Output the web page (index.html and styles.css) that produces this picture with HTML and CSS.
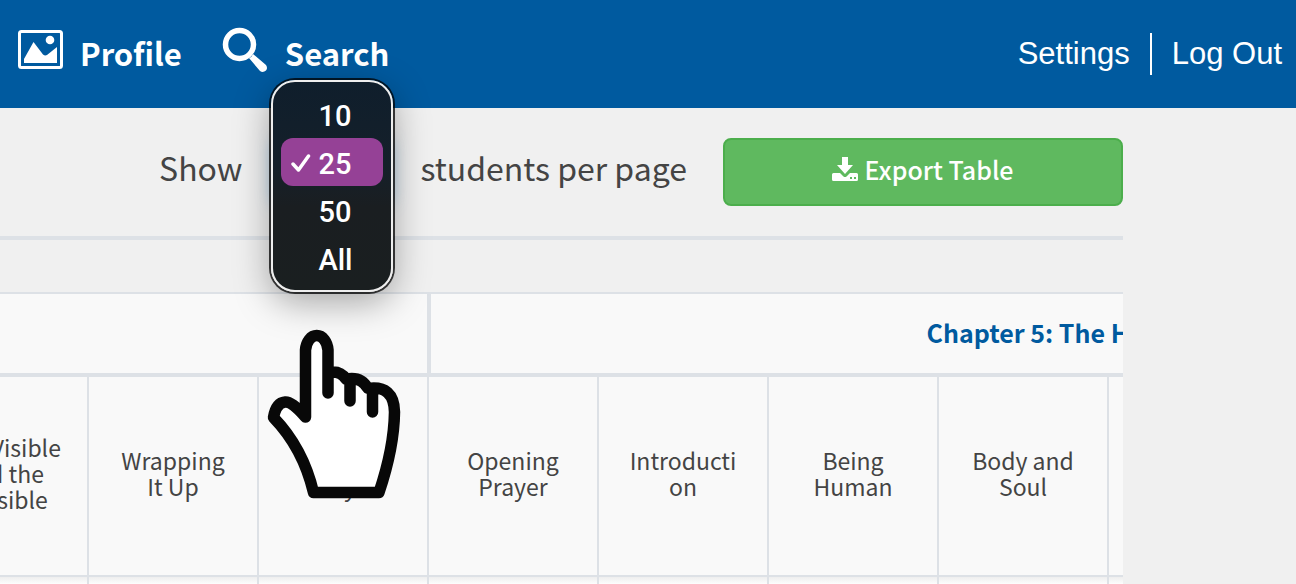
FILE: index.html
```html
<!DOCTYPE html>
<html lang="en">

<head>
  <meta charset="UTF-8">
  <title>Students</title>
  <link rel="stylesheet" href="styles.css">
</head>

<body>
  <header class="topbar">
    <nav class="main-nav">
      <a href="#profile">
        <svg class="nav-icon" width="45" height="40" viewBox="0 0 45 40">
          <rect x="1.5" y="1.5" width="42" height="36" rx="2" fill="none" stroke="#fff" stroke-width="3" />
          <circle cx="32" cy="10" r="4.3" fill="#fff" />
          <path d="M6 33V29L15.500 12L25 24.500Q27 26 29 25L39 17V33Z" fill="#fff" />
        </svg>
        <span>Profile</span>
      </a>
      <a href="#search">
        <svg class="nav-icon" width="46" height="46" viewBox="0 0 46 46">
          <circle cx="17.500" cy="17.500" r="14" fill="none" stroke="#fff" stroke-width="5.500" />
          <path d="M27 31Q30 30 31 27L44 38Q46 41 44 43.500Q41 46 38 44Z" fill="#fff" />
        </svg>
        <span>Search</span>
      </a>
    </nav>
    <nav class="user-nav">
      <a href="#settings">Settings</a>
      <a href="#logout">Log Out</a>
    </nav>
  </header>

  <main class="content">
    <div class="controls">
      <label for="page-size">Show</label>
      <div class="page-size">
        <select id="page-size">
          <option>10</option>
          <option selected>25</option>
          <option>50</option>
          <option>All</option>
        </select>
        <div class="menu">
          <button type="button">10</button>
          <button type="button" class="selected">
            <svg class="check" width="20" height="20" viewBox="0 0 20 20">
              <path d="M2 11L7.500 17L17.500 3" fill="none" stroke="#fff" stroke-width="3.500" stroke-linecap="round" stroke-linejoin="round" />
            </svg>25</button>
          <button type="button">50</button>
          <button type="button">All</button>
        </div>
        <svg class="hand" width="136" height="172" viewBox="0 0 136 172">
          <path d="M38 88V22A11.500 16 0 0 1 61 22V44Q72 43 77 51Q92 48 99 60Q127 58 127 84Q127 120 111.500 164.500H46.500Q36 120 6.500 89Q9 75 18 74Q25 73 38 88" fill="#fff" />
          <path d="M38.500 89V22A11.300 16 0 0 1 61 22V65M61 44.500Q73 42 79 51Q94 48 101 60.500Q127 57 127.500 84Q127 120 112 164.500H46.500Q36 120 6.500 89.500Q9 75 18 74Q25 73 38.500 89M83 55V73M105.500 62V84" fill="none" stroke="#080808" stroke-width="11.500" stroke-linecap="round" stroke-linejoin="round" />
        </svg>
      </div>
      <label for="page-size">students per page</label>
      <button type="button" class="export">
        <svg width="26" height="24" viewBox="0 0 26 24">
          <path d="M10 0H16V8H21L13 17L5 8H10Z" fill="#fff" />
          <path fill-rule="evenodd" d="M1.500 16H8L11.500 19.500Q13 20.500 14.500 19.500L18 16H24.500Q26 16 26 17.500V22.500Q26 24 24.500 24H1.500Q0 24 0 22.500V17.500Q0 16 1.500 16ZM18 20V22H20V20ZM22 20V22H24V20Z" fill="#fff" />
        </svg>
        <span>Export Table</span>
      </button>
    </div>

    <div class="table-scroll">
      <table class="grades">
        <thead>
          <tr class="chapters">
            <th colspan="3"></th>
            <th colspan="8">Chapter 5: The Human Person</th>
          </tr>
          <tr class="lessons">
            <th>The Visible and the Invisible</th>
            <th>Wrapping It Up</th>
            <th>Closing Prayer</th>
            <th>Opening Prayer</th>
            <th>Introduction</th>
            <th>Being Human</th>
            <th>Body and Soul</th>
            <th></th>
            <th></th>
            <th></th>
            <th></th>
          </tr>
        </thead>
        <tbody>
          <tr>
            <td></td>
            <td></td>
            <td></td>
            <td></td>
            <td></td>
            <td></td>
            <td></td>
            <td></td>
            <td></td>
            <td></td>
            <td></td>
          </tr>
        </tbody>
      </table>
    </div>
  </main>
</body>

</html>
```
FILE: styles.css
```css
:root {
  --blue: #005a9f;
  --line: #dde1e6;
  --text: #444;
  --cell: #f9f9f9;
}

* {
  box-sizing: border-box;
}

body {
  margin: 0;
  height: 100vh;
  overflow: hidden;
  font-family: "Noto Sans CJK SC", sans-serif;
  background: #f0f0f0;
  color: var(--text);
}

.topbar {
  display: flex;
  justify-content: space-between;
  height: 108px;
  padding: 0 14px 0 18px;
  background: var(--blue);
}

.topbar a {
  color: #fff;
  text-decoration: none;
}

.main-nav {
  display: flex;
  gap: 40px;
}

.main-nav a {
  display: flex;
  align-items: center;
  gap: 17px;
  font-size: 31px;
  font-weight: 700;
}

.main-nav span {
  padding-bottom: 4px;
}

.nav-icon {
  margin-bottom: 8px;
}

.user-nav {
  display: flex;
  align-items: center;
  font-family: "Liberation Sans", Arial, sans-serif;
  font-size: 31px;
}

.user-nav a {
  line-height: 42px;
}

.user-nav a + a {
  margin-left: 20px;
  padding-left: 20px;
  border-left: 2px solid #fff;
}

.content {
  margin-right: 173px;
}

.controls {
  display: flex;
  justify-content: flex-end;
  align-items: center;
  padding: 30px 0;
  border-bottom: 4px solid var(--line);
  font-size: 32px;
  line-height: 40px;
}

.controls label {
  padding-bottom: 10px;
}

.page-size {
  position: relative;
  width: 122px;
  margin: 0 28px;
}

.page-size select {
  display: block;
  width: 118px;
  height: 64px;
  margin: 0 auto;
  border: 2px solid #66afe9;
  border-radius: 8px;
  background: #fff;
  font: inherit;
  box-shadow: 0 0 16px rgba(102, 175, 233, .6);
}

/* open list of the page size select */
.menu {
  position: absolute;
  top: -60px;
  left: 0;
  z-index: 2;
  width: 122px;
  padding: 8px;
  border: 2px solid #eee;
  border-radius: 24px;
  background: linear-gradient(#0f1e2c, #15202a 40%, #1a1e21 60%, #1a1f20);
  box-shadow: 0 0 0 2px rgba(0, 0, 0, .75), 0 10px 36px rgba(0, 0, 0, .35);
}

.menu button {
  position: relative;
  display: block;
  width: 100%;
  height: 48px;
  padding: 4px 0 0 38px;
  border: 0;
  border-radius: 12px;
  background: none;
  color: #fff;
  font-family: Roboto, sans-serif;
  font-size: 29px;
  font-weight: 500;
  text-align: left;
  cursor: pointer;
}

.menu .selected {
  background: #954196;
}

.check {
  position: absolute;
  top: 15px;
  left: 10px;
}

.hand {
  position: absolute;
  top: 188px;
  left: -4px;
  z-index: 3;
}

.export {
  display: flex;
  align-items: center;
  justify-content: center;
  gap: 6px;
  width: 400px;
  height: 68px;
  margin-left: 36px;
  border: 2px solid #4cae4c;
  border-radius: 8px;
  background: #5fb95f;
  color: #fff;
  font-family: inherit;
  font-size: 25px;
  font-weight: 500;
  cursor: pointer;
}

.export svg,
.export span {
  margin-bottom: 6px;
}

.table-scroll {
  overflow: hidden;
  margin-top: 52px;
}

.grades {
  width: 1870px;
  margin-left: -81px;
  border-collapse: separate;
  border-spacing: 0;
  table-layout: fixed;
}

.grades th {
  background: var(--cell);
  border-right: 2px solid var(--line);
}

.chapters th {
  height: 85px;
  padding: 0 0 4px;
  border-top: 2px solid var(--line);
  border-bottom: 4px solid var(--line);
  color: var(--blue);
  font-size: 25px;
  font-weight: 700;
}

.chapters th + th {
  border-left: 2px solid var(--line);
}

.lessons th {
  height: 200px;
  padding: 0 24px 6px;
  border-bottom: 2px solid var(--line);
  font-size: 23px;
  font-weight: 400;
  line-height: 26px;
  overflow-wrap: break-word;
}

.grades td {
  height: 80px;
  border-right: 2px solid var(--line);
  background: linear-gradient(#eee, #fff 8px);
}
```
